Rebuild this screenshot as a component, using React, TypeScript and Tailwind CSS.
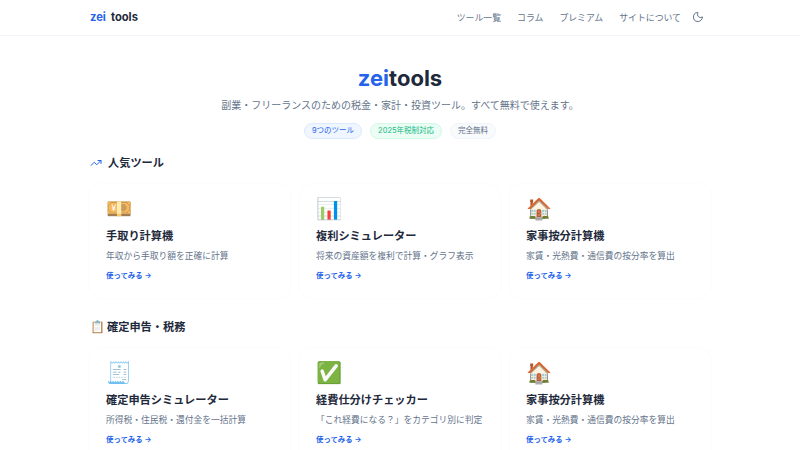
import React from 'react';
import { Moon, TrendingUp } from 'lucide-react';

const font = 'font-["Inter","Noto_Sans_CJK_JP",sans-serif]';

const navItems = ['ツール一覧', 'コラム', 'プレミアム', 'サイトについて'];

const popular = [
  { icon: '💴', title: '手取り計算機', desc: '年収から手取り額を正確に計算' },
  { icon: '📊', title: '複利シミュレーター', desc: '将来の資産額を複利で計算・グラフ表示' },
  { icon: '🏠', title: '家事按分計算機', desc: '家賃・光熱費・通信費の按分率を算出' },
];

const taxTools = [
  { icon: '🧾', title: '確定申告シミュレーター', desc: '所得税・住民税・還付金を一括計算' },
  { icon: '✅', title: '経費仕分けチェッカー', desc: '「これ経費になる？」をカテゴリ別に判定' },
  { icon: '🏠', title: '家事按分計算機', desc: '家賃・光熱費・通信費の按分率を算出' },
];

const ToolCard = ({ icon, title, desc }: { icon: string; title: string; desc: string }) => (
  <div className="h-[114px] rounded-xl bg-white px-4 pt-3 shadow-[0_0_4px_rgba(15,23,42,0.025)]">
    <div className="h-[26px] text-[21px] leading-[26px]">{icon}</div>
    <h3 className="mt-[4px] text-[11.2px] leading-5 font-bold text-[#1e293b]">{title}</h3>
    <p className="mt-[2px] text-[8.75px] leading-4 whitespace-nowrap text-[#64748b]">{desc}</p>
    <p className="mt-[4px] text-[7.4px] leading-4 font-semibold text-[#2563eb]">使ってみる →</p>
  </div>
);

const App = () => {
  return (
    <div className={`h-[450px] overflow-hidden bg-white ${font}`}>
      <header className="h-9 border-b border-[#f1f5f9]">
        <div className="mx-auto flex h-full w-[620px] items-center justify-between pr-[6px]">
          <div className="text-[11.2px] font-bold text-[#1e293b]">
            <span className="text-[#2563eb]">zei</span>
            <span className="ml-[5px]">tools</span>
          </div>
          <nav className="flex items-center gap-4 text-[8.9px] text-[#64748b]">
            {navItems.map((item) => (
              <span key={item}>{item}</span>
            ))}
            <Moon className="-ml-[5px] h-3 w-3" />
          </nav>
        </div>
      </header>

      <main className="mx-auto w-[620px]">
        <section className="flex flex-col items-center pt-[26px]">
          <h1 className="text-[22px] leading-8 font-bold text-[#1e293b]">
            <span className="text-[#2563eb]">zei</span>tools
          </h1>
          <p className="mt-[3px] text-[10px] leading-4 text-[#64748b]">
            副業・フリーランスのための税金・家計・投資ツール。すべて無料で使えます。
          </p>
          <div className="mt-[10px] flex gap-2 text-[7.5px] leading-[14px]">
            <span className="rounded-full border border-[#dbeafe] bg-[#eff6ff] px-[7px] text-[#2563eb]">9つのツール</span>
            <span className="rounded-full border border-[#d1fae5] bg-[#ecfdf5] px-[7px] text-[#10b981]">2025年税制対応</span>
            <span className="rounded-full border border-[#f1f5f9] bg-[#f8fafc] px-[7px] text-[#64748b]">完全無料</span>
          </div>
        </section>

        <h2 className="mt-[14px] flex items-center gap-[6px] text-[11.2px] leading-5 font-bold text-[#1e293b]">
          <TrendingUp className="h-3 w-3 text-[#2563eb]" />
          人気ツール
        </h2>
        <div className="mt-[11px] grid grid-cols-3 gap-[10px]">
          {popular.map((tool) => (
            <ToolCard key={tool.title} {...tool} />
          ))}
        </div>

        <h2 className="mt-[19px] flex items-center gap-[2px] text-[11.2px] leading-5 font-bold text-[#1e293b]">
          <span className="text-[12px]">📋</span>
          確定申告・税務
        </h2>
        <div className="mt-[11px] grid grid-cols-3 gap-[10px]">
          {taxTools.map((tool) => (
            <ToolCard key={tool.title} {...tool} />
          ))}
        </div>
      </main>
    </div>
  );
};

export default App;
